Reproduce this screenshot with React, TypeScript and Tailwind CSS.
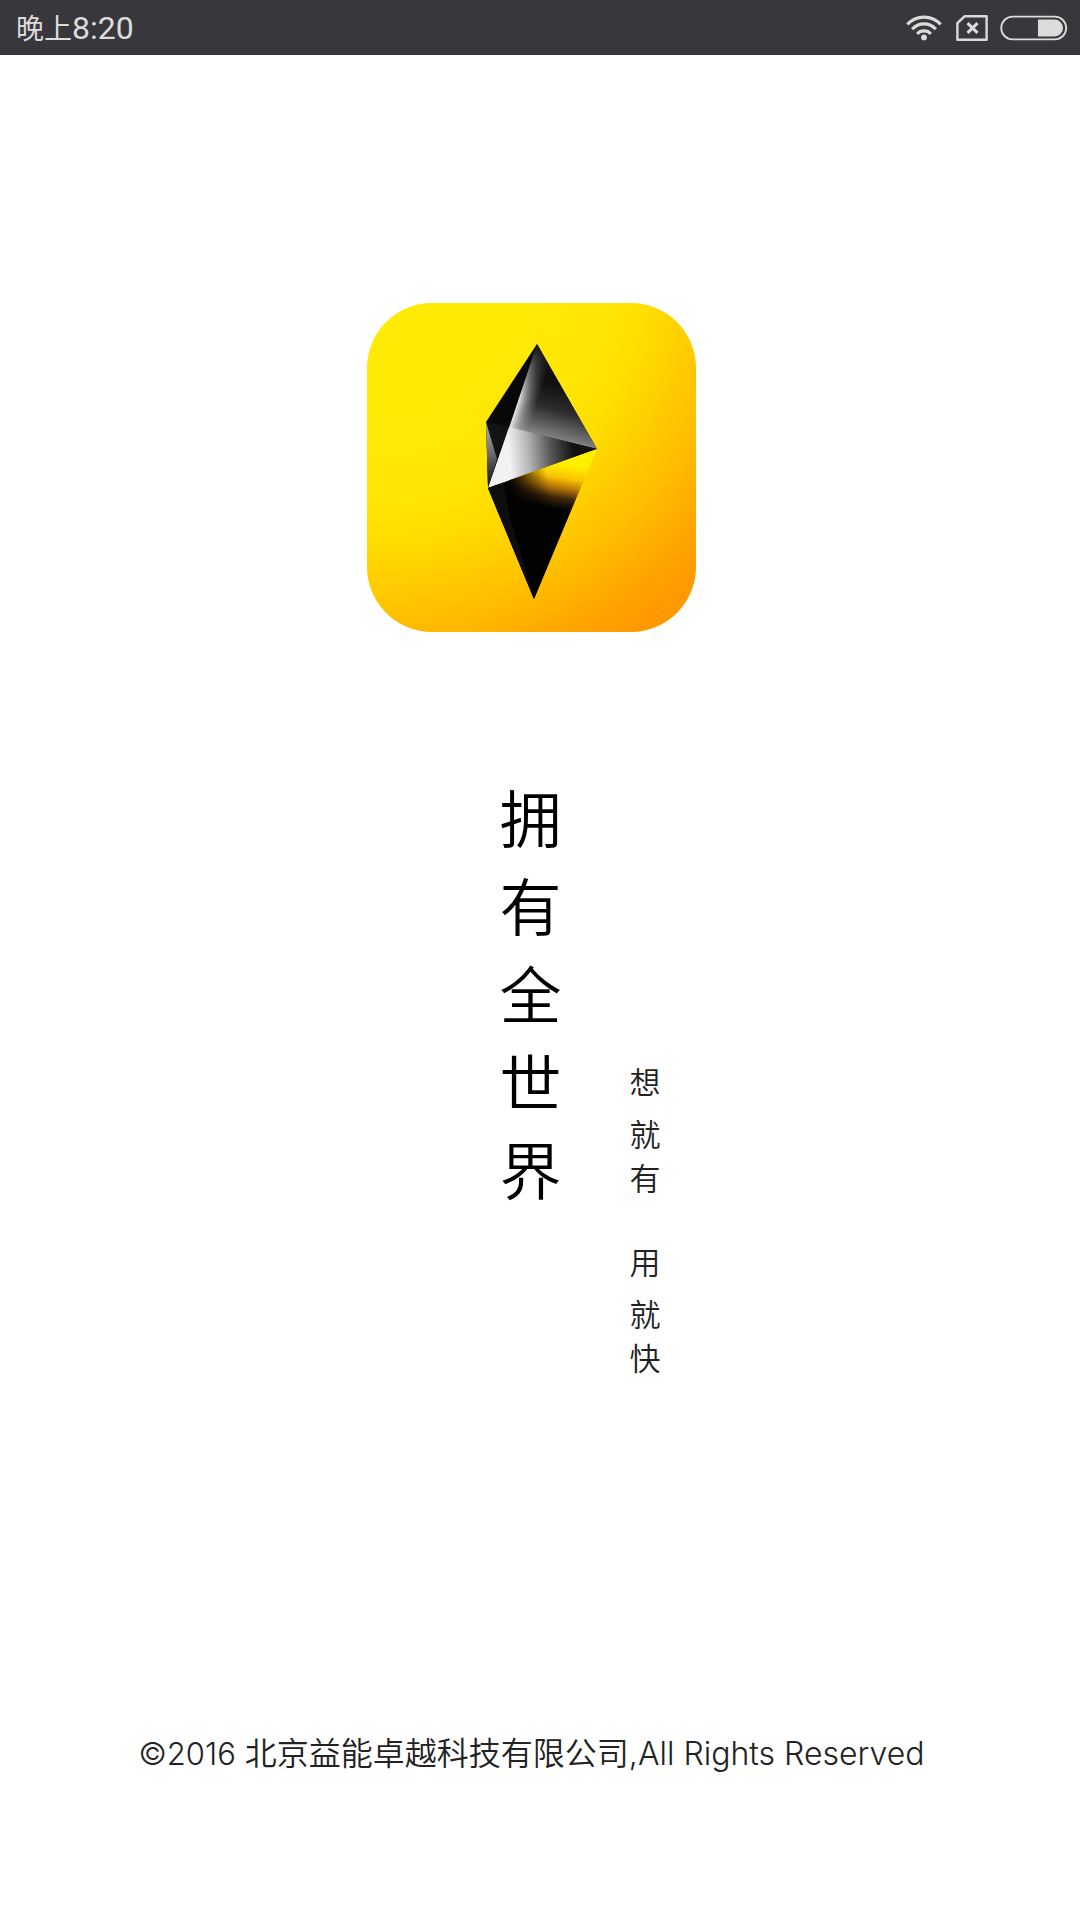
const slogan = ["拥", "有", "全", "世", "界"];
const subtitle = [
  ["想", "就", "有"],
  ["用", "就", "快"],
];

function WifiIcon() {
  return (
    <svg width="36" height="26" viewBox="0 0 36 26" fill="none" stroke="#dcdcdc" strokeWidth="3.2" aria-label="Wi-Fi">
      <path d="M1.4 9.4 A22.5 22.5 0 0 1 34.6 9.4" />
      <path d="M6.2 14.2 A15.8 15.8 0 0 1 29.8 14.2" />
      <path d="M11.2 18.8 A9.4 9.4 0 0 1 24.8 18.8" />
      <circle cx="18" cy="22.4" r="2.9" fill="#dcdcdc" stroke="none" />
    </svg>
  );
}

function SimIcon() {
  return (
    <svg width="32" height="26" viewBox="0 0 32 26" fill="none" stroke="#dcdcdc" aria-label="No SIM card">
      <path d="M8.5 1.3 H30.6 V24.7 H1.4 V8.2 Z" strokeWidth="2.4" strokeLinejoin="round" />
      <path d="M11.5 8.2 L21.5 17.8 M21.5 8.2 L11.5 17.8" strokeWidth="3" />
    </svg>
  );
}

function BatteryIcon() {
  return (
    <svg width="68" height="26" viewBox="0 0 68 26" fill="none" aria-label="Battery">
      <rect x="1.2" y="1.7" width="65" height="22.6" rx="11.3" stroke="#dcdcdc" strokeWidth="1.8" />
      <path d="M38 4.5 H54.5 A8.5 8.5 0 0 1 54.5 21.5 H38 Z" fill="#dcdcdc" />
    </svg>
  );
}

function AppLogo() {
  return (
    <svg width="329" height="329" viewBox="0 0 329 329" aria-label="Logo">
      <defs>
        <radialGradient id="bg" gradientUnits="userSpaceOnUse" cx="0" cy="-50" r="500">
          <stop offset="0.32" stopColor="#ffea06" />
          <stop offset="0.5" stopColor="#ffe504" />
          <stop offset="0.58" stopColor="#ffdc00" />
          <stop offset="0.75" stopColor="#ffbc00" />
          <stop offset="0.86" stopColor="#ffa300" />
          <stop offset="0.93" stopColor="#ff9900" />
        </radialGradient>
        <linearGradient id="upperFace" gradientUnits="userSpaceOnUse" x1="196" y1="84" x2="182" y2="135">
          <stop offset="0" stopColor="#101010" />
          <stop offset="0.45" stopColor="#2c2c2c" />
          <stop offset="1" stopColor="#858585" />
        </linearGradient>
        <linearGradient id="edgeLight" gradientUnits="userSpaceOnUse" x1="146" y1="112" x2="165" y2="118">
          <stop offset="0" stopColor="#f2f2f2" />
          <stop offset="0.4" stopColor="#b4b4b4" stopOpacity="0.65" />
          <stop offset="1" stopColor="#808080" stopOpacity="0" />
        </linearGradient>
        <linearGradient id="edgeFade" gradientUnits="userSpaceOnUse" x1="170" y1="41" x2="152" y2="127">
          <stop offset="0" stopColor="#000" />
          <stop offset="0.3" stopColor="#777" />
          <stop offset="0.65" stopColor="#fff" />
        </linearGradient>
        <mask id="edgeMask" maskUnits="userSpaceOnUse" x="100" y="30" width="140" height="140">
          <rect x="100" y="30" width="140" height="140" fill="url(#edgeFade)" />
        </mask>
        <linearGradient id="frontFace" gradientUnits="userSpaceOnUse" x1="142" y1="150" x2="206" y2="144">
          <stop offset="0" stopColor="#f2f2f2" />
          <stop offset="0.3" stopColor="#b4b4b4" />
          <stop offset="0.65" stopColor="#555" />
          <stop offset="1" stopColor="#111" />
        </linearGradient>
        <linearGradient id="sideFace" gradientUnits="userSpaceOnUse" x1="119" y1="124" x2="125" y2="182">
          <stop offset="0" stopColor="#aaa" />
          <stop offset="0.5" stopColor="#666" />
          <stop offset="1" stopColor="#111" />
        </linearGradient>
        <linearGradient id="glow" gradientUnits="userSpaceOnUse" x1="203" y1="162" x2="195" y2="207">
          <stop offset="0" stopColor="#fff000" />
          <stop offset="0.3" stopColor="#fbc400" />
          <stop offset="0.52" stopColor="#b9780a" />
          <stop offset="0.76" stopColor="#3b2508" />
          <stop offset="1" stopColor="#020202" />
        </linearGradient>
        <linearGradient id="glowShade" gradientUnits="userSpaceOnUse" x1="141" y1="178" x2="180" y2="171">
          <stop offset="0" stopColor="#020202" />
          <stop offset="0.3" stopColor="#020202" stopOpacity="0.7" />
          <stop offset="1" stopColor="#020202" stopOpacity="0" />
        </linearGradient>
      </defs>
      <rect width="329" height="329" rx="65" fill="url(#bg)" />
      <path d="M170 41 L119 119 L121 185 L230 146 Z" fill="#080808" />
      <path d="M119 119 L141 123 L130 156 Z" fill="#141414" />
      <path d="M119 119 L130 156 L121 185 Z" fill="url(#sideFace)" />
      <path d="M170 41 L230 146 L143 125 Z" fill="url(#upperFace)" />
      <path d="M170 41 L230 146 L142 125 Z" fill="url(#edgeLight)" mask="url(#edgeMask)" />
      <path d="M142 124 L230 146 L121 185 Z" fill="url(#frontFace)" />
      <path d="M121 185 L230 146 L167 296 Z" fill="url(#glow)" />
      <path d="M121 185 L230 146 L167 296 Z" fill="url(#glowShade)" />
      <path d="M121 185 L136 180 L144 218 L167 296 Z" fill="#0e0e0e" />
    </svg>
  );
}

export default function App() {
  return (
    <div className="flex min-h-screen flex-col bg-white font-['Noto_Sans_CJK_SC',sans-serif]">
      <header className="flex h-[55px] items-center justify-between bg-[#38373c] pl-4 pr-3 text-[#dcdcdc]">
        <time className="flex items-baseline text-[28px] leading-10">
          晚上<span className="font-['Roboto',sans-serif] text-[32px]">8:20</span>
        </time>
        <div className="flex items-center gap-3">
          <div className="pr-0.5">
            <WifiIcon />
          </div>
          <SimIcon />
          <BatteryIcon />
        </div>
      </header>
      <main className="flex flex-1 flex-col items-center pr-[17px] pt-[248px]">
        <AppLogo />
        <div className="mt-[140px] grid w-full grid-cols-[1fr_64px_1fr] font-[350]">
          <h1 className="col-start-2 flex flex-col text-[62px] leading-[88px] text-black">
            {slogan.map((c) => (
              <span key={c}>{c}</span>
            ))}
          </h1>
          <div className="flex flex-col gap-10 pl-[66px] pt-[287px] text-[31px] leading-[44px] text-[#222]">
            {subtitle.map((line) => (
              <p key={line[0]} className="flex flex-col">
                <span className="mb-2">{line[0]}</span>
                <span>{line[1]}</span>
                <span>{line[2]}</span>
              </p>
            ))}
          </div>
        </div>
        <footer className="mt-auto whitespace-nowrap pb-[142px] font-['Inter','Noto_Sans_CJK_SC',sans-serif] text-[32px] font-[350] leading-[48px] text-[#222]">
          <span className="text-[31px]">©2016</span> 北京益能卓越科技有限公司,All Rights Reserved
        </footer>
      </main>
    </div>
  );
}
